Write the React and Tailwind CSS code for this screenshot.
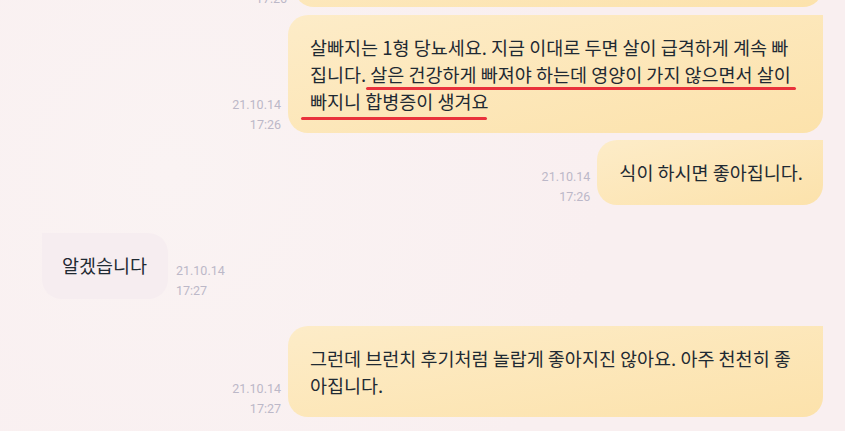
import React from "react";

const Stamp = ({ date, time, left = false }) => (
  <div
    className={`font-['Roboto','Liberation_Sans',sans-serif] text-[12.5px] leading-[20px] text-[#bcb8c8] -mb-[2px] shrink-0 ${
      left ? "text-left" : "text-right"
    }`}
  >
    <div>{date}</div>
    <div>{time}</div>
  </div>
);

const Mine = ({ children, date, time, className = "", bubbleClass = "" }) => (
  <div className={`flex justify-end items-end gap-[7px] ${className}`}>
    <Stamp date={date} time={time} />
    <div
      className={`relative rounded-[20px] rounded-tr-none bg-gradient-to-br from-[#fdecc8] to-[#fce2ab] px-[22px] py-[19px] font-['Noto_Sans_CJK_KR','Noto_Sans',sans-serif] text-[18.5px] leading-[27px] text-[#1f2a33] ${bubbleClass}`}
    >
      {children}
    </div>
  </div>
);

export default function App() {
  return (
    <div className="w-[845px] h-[431px] overflow-hidden bg-[#f9eff0] bg-[radial-gradient(circle_at_20%_40%,#faf3f3_0%,#f9eff0_60%)]">
      <div className="pl-[42px] pr-[22px]">
        {/* 잘린 윗 메시지 */}
        <Mine date="21.10.14" time="17:26" className="-mt-[58px]" bubbleClass="w-[529px] h-[65px]">
          <span className="invisible">.</span>
        </Mine>

        <Mine date="21.10.14" time="17:26" className="mt-[8px]" bubbleClass="w-[535px] h-[118px]">
          <div className="whitespace-nowrap">살빠지는 1형 당뇨세요. 지금 이대로 두면 살이 급격하게 계속 빠</div>
          <div className="whitespace-nowrap">집니다. 살은 건강하게 빠져야 하는데 영양이 가지 않으면서 살이</div>
          <div className="whitespace-nowrap">빠지니 합병증이 생겨요</div>
          {/* 빨간 밑줄 표시 */}
          <span className="absolute left-[78px] top-[72px] w-[430px] h-[3px] rounded-full bg-[#e9323b]" />
          <span className="absolute left-[13px] top-[102px] w-[186px] h-[3px] rounded-full bg-[#e9323b]" />
        </Mine>

        <Mine date="21.10.14" time="17:26" className="mt-[7px]" bubbleClass="h-[65px] pl-[22px] pr-[20px]">
          <div className="whitespace-nowrap">식이 하시면 좋아집니다.</div>
        </Mine>

        <div className="flex items-end gap-[8px] mt-[28px]">
          <div className="rounded-[20px] rounded-tl-none bg-[#f6edf0] w-[126px] h-[66px] px-[20px] py-[19px] font-['Noto_Sans_CJK_KR','Noto_Sans',sans-serif] text-[18.5px] leading-[27px] text-[#1f2a33]">
            <div className="whitespace-nowrap">알겠습니다</div>
          </div>
          <Stamp date="21.10.14" time="17:27" left />
        </div>

        <Mine date="21.10.14" time="17:27" className="mt-[27px]" bubbleClass="w-[535px] h-[91px]">
          <div className="whitespace-nowrap">그런데 브런치 후기처럼 놀랍게 좋아지진 않아요. 아주 천천히 좋</div>
          <div className="whitespace-nowrap">아집니다.</div>
        </Mine>
      </div>
    </div>
  );
}
